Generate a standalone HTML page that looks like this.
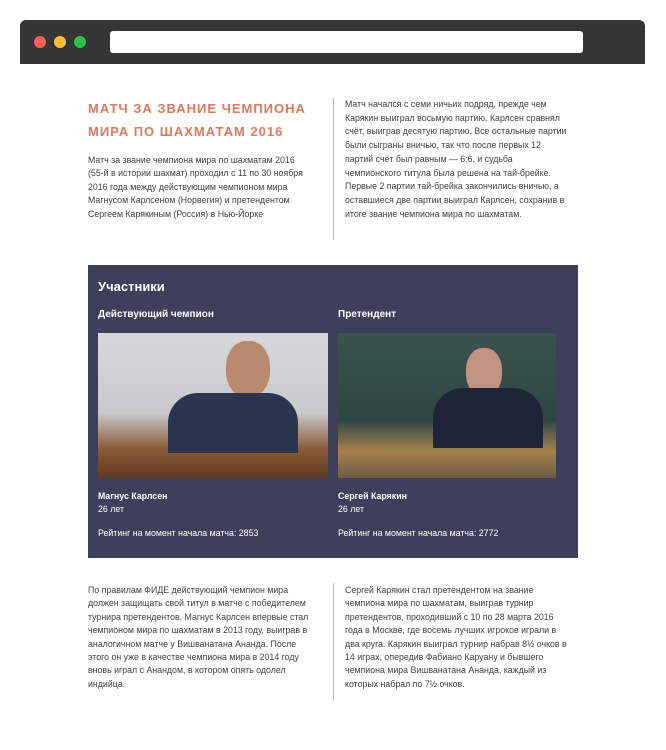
<!DOCTYPE html>
<html><head><meta charset="utf-8"><style>
*{margin:0;padding:0;box-sizing:border-box}
body{width:666px;height:750px;background:#fff;position:relative;overflow:hidden;font-family:"Liberation Sans",sans-serif;color:#3f3f3f}
.bar{position:absolute;left:20px;top:20px;width:625px;height:44px;background:#353535;border-radius:6px 6px 0 0}
.dot{position:absolute;top:16px;width:12px;height:12px;border-radius:50%}
.addr{position:absolute;left:90px;top:11px;width:473px;height:22px;background:#fff;border-radius:3px}
.t{position:absolute;font-size:8.8px;line-height:13.4px;white-space:nowrap}
h1{position:absolute;left:88px;top:97px;font-size:13px;line-height:23px;color:#e2775a;letter-spacing:1px;font-weight:bold}
.vl{position:absolute;left:333px;width:1px;background:#b8b8c4}
.panel{position:absolute;left:88px;top:265px;width:490px;height:293px;background:#3d3f5b;color:#fff}
.panel .a{position:absolute;white-space:nowrap}
</style></head><body>
<div class="bar">
<div class="dot" style="left:14px;background:#fe5f57"></div>
<div class="dot" style="left:34px;background:#febc2e"></div>
<div class="dot" style="left:54px;background:#28c840"></div>
<div class="addr"></div>
</div>
<h1>МАТЧ ЗА ЗВАНИЕ ЧЕМПИОНА<br>МИРА ПО ШАХМАТАМ 2016</h1>
<div class="t" style="left:88px;top:154px">Матч за звание чемпиона мира по шахматам 2016<br>(55-й в истории шахмат) проходил с 11 по 30 ноября<br>2016 года между действующим чемпионом мира<br>Магнусом Карлсеном (Норвегия) и претендентом<br>Сергеем Карякиным (Россия) в Нью-Йорке</div>
<div class="vl" style="top:98px;height:142px"></div>
<div class="t" style="left:345px;top:98px;line-height:13.7px">Матч начался с семи ничьих подряд, прежде чем<br>Карякин выиграл восьмую партию. Карлсен сравнял<br>счёт, выиграв десятую партию. Все остальные партии<br>были сыграны вничью, так что после первых 12<br>партий счёт был равным — 6:6, и судьба<br>чемпионского титула была решена на тай-брейке.<br>Первые 2 партии тай-брейка закончились вничью, а<br>оставшиеся две партии выиграл Карлсен, сохранив в<br>итоге звание чемпиона мира по шахматам.</div>
<div class="panel">
<div class="a" style="left:10px;top:14px;font-size:13px;font-weight:bold">Участники</div>
<div class="a" style="left:10px;top:44px;font-size:10px;font-weight:bold">Действующий чемпион</div>
<div class="a" style="left:250px;top:44px;font-size:10px;font-weight:bold">Претендент</div>
<div style="position:absolute;left:10px;top:68px;width:230px;height:145px;background:linear-gradient(180deg,#d6d7d9 0%,#c9cacc 55%,#8a5a35 80%,#5e3a22 100%)">
<div style="position:absolute;left:128px;top:8px;width:44px;height:56px;border-radius:45%;background:#b98a70"></div>
<div style="position:absolute;left:70px;top:60px;width:130px;height:60px;border-radius:30px 30px 0 0;background:#2b3550"></div>
</div>
<div style="position:absolute;left:250px;top:68px;width:218px;height:145px;background:linear-gradient(180deg,#3b5450 0%,#2f4542 60%,#a8824e 82%,#6d5a45 100%)">
<div style="position:absolute;left:128px;top:15px;width:36px;height:48px;border-radius:45%;background:#c09480"></div>
<div style="position:absolute;left:95px;top:55px;width:110px;height:60px;border-radius:30px 30px 0 0;background:#1f2438"></div>
</div>
<div class="a" style="left:10px;top:226px;font-size:8.8px;font-weight:bold">Магнус Карлсен</div>
<div class="a" style="left:10px;top:239px;font-size:8.8px">26 лет</div>
<div class="a" style="left:10px;top:263px;font-size:8.8px">Рейтинг на момент начала матча: 2853</div>
<div class="a" style="left:250px;top:226px;font-size:8.8px;font-weight:bold">Сергей Карякин</div>
<div class="a" style="left:250px;top:239px;font-size:8.8px">26 лет</div>
<div class="a" style="left:250px;top:263px;font-size:8.8px">Рейтинг на момент начала матча: 2772</div>
</div>
<div class="t" style="left:88px;top:584px">По правилам ФИДЕ действующий чемпион мира<br>должен защищать свой титул в матче с победителем<br>турнира претендентов. Магнус Карлсен впервые стал<br>чемпионом мира по шахматам в 2013 году, выиграв в<br>аналогичном матче у Вишванатана Ананда. После<br>этого он уже в качестве чемпиона мира в 2014 году<br>вновь играл с Анандом, в котором опять одолел<br>индийца.</div>
<div class="vl" style="top:583px;height:117px"></div>
<div class="t" style="left:345px;top:584px">Сергей Карякин стал претендентом на звание<br>чемпиона мира по шахматам, выиграв турнир<br>претендентов, проходивший с 10 по 28 марта 2016<br>года в Москве, где восемь лучших игроков играли в<br>два круга. Карякин выиграл турнир набрав 8½ очков в<br>14 играх, опередив Фабиано Каруану и бывшего<br>чемпиона мира Вишванатана Ананда, каждый из<br>которых набрал по 7½ очков.</div>
</body></html>
